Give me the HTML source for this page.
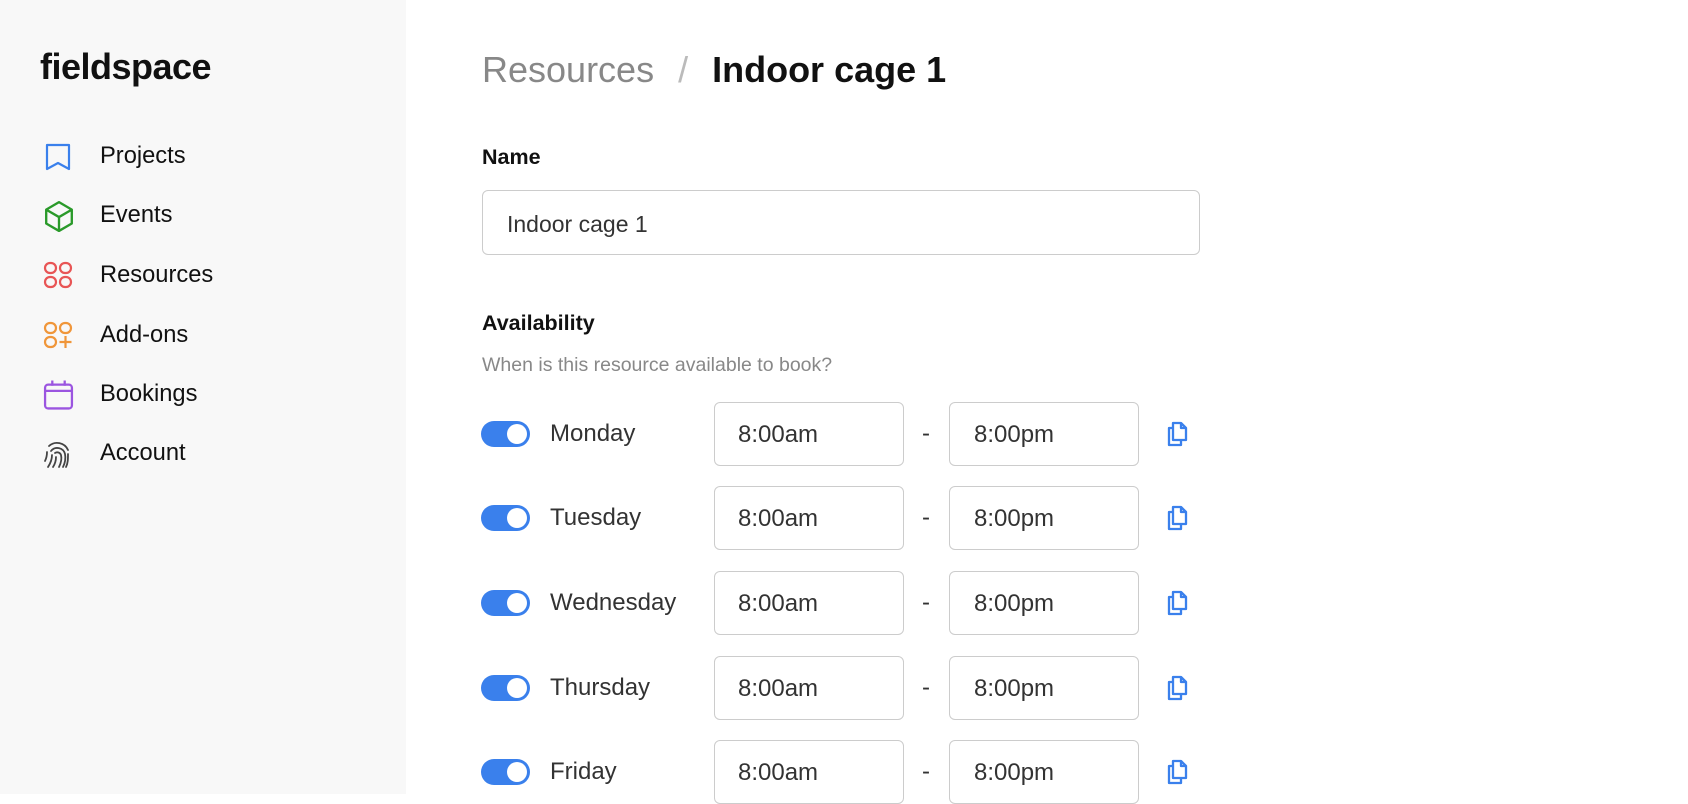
<!DOCTYPE html>
<html><head><meta charset="utf-8"><style>
*{margin:0;padding:0;box-sizing:border-box}
body{width:1688px;height:794px;overflow:hidden;background:#fff;font-family:"Liberation Sans",sans-serif;color:#111;position:relative}
.side{position:absolute;left:0;top:0;width:406px;height:794px;background:#f8f8f8}
.logo{position:absolute;left:40px;top:46px;font-size:36px;font-weight:bold;letter-spacing:-0.5px;color:#111}
.nav{position:absolute;left:0;width:406px;height:40px}
.nav svg{position:absolute;left:43px;top:5px}
.nav span{position:absolute;left:100px;top:7px;font-size:23.7px;color:#111}
.abs{position:absolute}
.bc{left:482px;top:49px;font-size:36px;white-space:nowrap}
.lbl{font-size:21.5px;font-weight:bold;left:482px}
.inp{border:1.5px solid #ccc;border-radius:6px;background:#fff}
.tog{width:49px;height:26px;border-radius:13px;background:#3a80ec}
.tog::after{content:"";position:absolute;right:3px;top:3px;width:20px;height:20px;border-radius:50%;background:#fff}
.day{font-size:24px;color:#333}
.t{font-size:24px;color:#333}
</style></head><body>
<div class="side">
<div class="logo">fieldspace</div>
<div class="nav" style="top:136px"><svg width="30" height="32" viewBox="0 0 30 30" fill="none" stroke="#3a80ec" stroke-width="2.2" stroke-linejoin="round"><path d="M4 3h22v24l-11-6-11 6z"/></svg><span>Projects</span></div>
<div class="nav" style="top:195px"><svg width="32" height="32" viewBox="0 0 30 30" fill="none" stroke="#2a9a2a" stroke-width="2.2" stroke-linejoin="round"><path d="M15 2l12 7v13l-12 7-12-7V9z"/><path d="M3 9l12 7 12-7M15 16v13"/></svg><span>Events</span></div>
<div class="nav" style="top:255px"><svg width="30" height="30" viewBox="0 0 30 30" fill="none" stroke="#e85555" stroke-width="2.2"><rect x="2" y="3" width="11" height="10" rx="5"/><rect x="17" y="3" width="11" height="10" rx="5"/><rect x="2" y="17" width="11" height="10" rx="5"/><rect x="17" y="17" width="11" height="10" rx="5"/></svg><span>Resources</span></div>
<div class="nav" style="top:315px"><svg width="30" height="30" viewBox="0 0 30 30" fill="none" stroke="#f0963a" stroke-width="2.2"><rect x="2" y="3" width="11" height="10" rx="5"/><rect x="17" y="3" width="11" height="10" rx="5"/><rect x="2" y="17" width="11" height="10" rx="5"/><path d="M22.5 16v12M16.5 22h12"/></svg><span>Add-ons</span></div>
<div class="nav" style="top:374px"><svg width="31" height="32" viewBox="0 0 30 30" fill="none" stroke="#9b55e0" stroke-width="2.2"><rect x="2" y="5" width="26" height="23" rx="3"/><path d="M2 11h26M9 1v5M21 1v5"/></svg><span>Bookings</span></div>
<div class="nav" style="top:433px"><svg width="30" height="32" viewBox="0 0 30 30" fill="none" stroke="#444" stroke-width="1.8" stroke-linecap="round"><path d="M6 7a12 12 0 0 1 19 4M4 13c0 4-1 7-2 9M25 15c0 5 0 9-2 13M8 12a8 8 0 0 1 14 3c1 5 0 9-2 13M9 16c0 5-2 9-4 12M12 14a4 4 0 0 1 6 2c1 4 0 8-2 12M13 18c0 4-1 7-3 10"/></svg><span>Account</span></div>
</div>

<div class="abs bc"><span style="color:#888">Resources</span><span style="color:#bbb;margin:0 24px">/</span><span style="font-weight:bold">Indoor cage 1</span></div>
<div class="abs lbl" style="top:145px">Name</div>
<div class="abs inp" style="left:482px;top:190px;width:718px;height:65px"><span class="abs" style="left:24px;top:20px;font-size:23px;color:#333">Indoor cage 1</span></div>
<div class="abs lbl" style="top:311px">Availability</div>
<div class="abs" style="left:482px;top:354px;font-size:19.5px;color:#888">When is this resource available to book?</div>

<div id="rows"></div>
<script>
var days=["Monday","Tuesday","Wednesday","Thursday","Friday"],cy=[434,518,603,688,772],h="";
for(var i=0;i<5;i++){var c=cy[i];
h+='<div class="abs tog" style="left:481px;top:'+(c-13)+'px"></div>'+
'<div class="abs day" style="left:550px;top:'+(c-14)+'px">'+days[i]+'</div>'+
'<div class="abs inp" style="left:714px;top:'+(c-32)+'px;width:190px;height:64px"><span class="abs t" style="left:23px;top:18px">8:00am</span></div>'+
'<div class="abs t" style="left:922px;top:'+(c-14)+'px">-</div>'+
'<div class="abs inp" style="left:949px;top:'+(c-32)+'px;width:190px;height:64px"><span class="abs t" style="left:24px;top:18px">8:00pm</span></div>'+
'<svg class="abs" style="left:1166px;top:'+(c-13)+'px" width="22" height="26" viewBox="0 0 22 26" fill="none" stroke="#3a80ec" stroke-width="2.3" stroke-linejoin="round"><path d="M7 2h8l5 5v12H7z"/><path d="M15 2v5h5"/><path d="M7 7H3v17h12v-5"/></svg>';}
document.getElementById("rows").innerHTML=h;
</script>
</body></html>
